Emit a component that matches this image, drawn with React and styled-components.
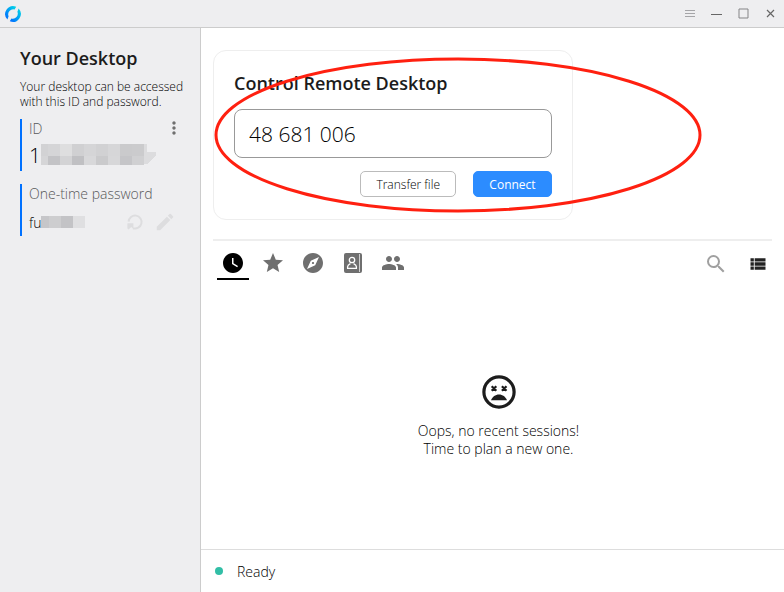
import React, { useState } from "react";
import styled, { createGlobalStyle, css } from "styled-components";
import {
  MdWatchLater,
  MdStar,
  MdExplore,
  MdPeople,
  MdSearch,
  MdViewList,
  MdMoreVert,
  MdEdit,
} from "react-icons/md";

const GlobalStyle = createGlobalStyle`
  *, *::before, *::after { box-sizing: border-box; }
  body {
    margin: 0;
    background: #fff;
    color: #000;
    font-family: "Open Sans", "Noto Sans", sans-serif;
    font-size: 14px;
    font-weight: 300;
  }
  button, input { font: inherit; color: inherit; }
`;

const Window = styled.div`
  display: flex;
  flex-direction: column;
  min-height: 100vh;
`;

const TitleBar = styled.header`
  display: flex;
  align-items: center;
  justify-content: space-between;
  height: 28px;
  padding: 0 0 0 4px;
  background: #eeeef0;
  border-bottom: 1px solid #ccc;
`;

const WindowControls = styled.div`
  display: flex;
`;

const IconButton = styled.button`
  display: inline-flex;
  flex: none;
  align-items: center;
  justify-content: center;
  width: ${(p) => p.$width || 24}px;
  height: ${(p) => p.$height || 24}px;
  padding: 0;
  border: 0;
  background: transparent;
  color: ${(p) => p.$color || "#6f6f6f"};
  cursor: pointer;
`;

const Body = styled.div`
  display: flex;
  flex: 1;
`;

const Sidebar = styled.aside`
  flex: none;
  width: 201px;
  padding: 17px 16px 0 20px;
  background: #eeeef0;
  border-right: 1px solid #ccc;
`;

const Heading = styled.h2`
  display: block;
  margin: 0;
  color: #1c1c1c;
  font-size: 18px;
  font-weight: 600;
  line-height: 26px;
`;

const Hint = styled.p`
  margin: 8px 0 10px;
  font-size: 12px;
  line-height: 15px;
  white-space: nowrap;
`;

const Field = styled.section`
  height: 52px;
  margin-bottom: 13px;
  padding-left: 7px;
  border-left: 2px solid #0071ff;
`;

const FieldRow = styled.div`
  display: flex;
  align-items: center;
  justify-content: space-between;
  height: ${(p) => p.$height}px;
`;

const FieldLabel = styled.span`
  color: #58585a;
  font-size: 14px;
`;

const FieldValue = styled.span`
  display: flex;
  align-items: center;
  font-size: ${(p) => p.$size}px;
`;

const Actions = styled.div`
  display: flex;
  gap: 6px;
  margin-right: 7px;
`;

const Main = styled.main`
  display: flex;
  flex: 1;
  flex-direction: column;
  min-width: 0;
`;

const Content = styled.div`
  display: flex;
  flex: 1;
  flex-direction: column;
  padding: 22px 0 0 12px;
`;

const Card = styled.form`
  position: relative;
  width: 360px;
  padding: 19px 20px 22px;
  border: 1px solid #eee;
  border-radius: 13px;
`;

const IdInput = styled.input`
  display: block;
  width: 100%;
  height: 49px;
  margin: 13px 0;
  padding: 0 14px;
  border: 1px solid #999;
  border-radius: 8px;
  background: #fff;
  font-size: 21px;
  outline: none;
`;

const CardActions = styled.div`
  display: flex;
  justify-content: flex-end;
  gap: 17px;
`;

const Button = styled.button`
  min-width: 79px;
  height: 26px;
  padding: 0 15px;
  border: 1px solid #bbb;
  border-radius: 5px;
  background: #fff;
  font-size: 12px;
  cursor: pointer;
  ${(p) =>
    p.$primary &&
    css`
      border-color: #2c8cff;
      background: #2c8cff;
      color: #fff;
      font-weight: 400;
    `}
`;

const Marker = styled.svg`
  position: absolute;
  top: 5px;
  left: 0;
  pointer-events: none;
`;

const Toolbar = styled.div`
  display: flex;
  align-items: flex-start;
  justify-content: space-between;
  margin: 19px 12px 0 0;
  padding: 7px 0 0 4px;
  border-top: 2px solid #eee;
`;

const Tabs = styled.nav`
  display: flex;
  gap: 8px;
`;

const Tab = styled.button`
  display: flex;
  align-items: center;
  justify-content: center;
  width: 32px;
  height: 32px;
  padding: 0;
  border: 0;
  border-bottom: 2px solid ${(p) => (p.$active ? "#000" : "transparent")};
  background: transparent;
  color: ${(p) => (p.$active ? "#000" : "#6f6f6f")};
  cursor: pointer;
`;

const Tools = styled.div`
  display: flex;
  gap: 18px;
  padding: 4px 2px 0 0;
`;

const Empty = styled.div`
  display: flex;
  flex: 1;
  flex-direction: column;
  align-items: center;
  justify-content: center;
  gap: 10px;
  line-height: 18px;
  text-align: center;
`;

const EmptyText = styled.p`
  margin: 0;
`;

const StatusBar = styled.footer`
  display: flex;
  align-items: center;
  gap: 14px;
  height: 43px;
  padding-left: 14px;
  border-top: 1px solid #ddd;
`;

const StatusDot = styled.span`
  width: 8px;
  height: 8px;
  border-radius: 50%;
  background: #32bea6;
`;

function Logo() {
  return (
    <svg width="18" height="18" viewBox="0 0 18 18" aria-label="RustDesk">
      <defs>
        <linearGradient id="logo" x1="0" y1="1" x2="1" y2="0">
          <stop offset="0.1" stopColor="#0071ff" />
          <stop offset="0.9" stopColor="#00d0e8" />
        </linearGradient>
      </defs>
      <g fill="url(#logo)">
        <path d="M3.4 14.6A8 8 0 0 1 12.2 1.7L10.6 4.6A5 5 0 0 0 4.6 11.3Z" />
        <path d="M14.6 3.4A8 8 0 0 1 5.8 16.3L7.4 13.4A5 5 0 0 0 13.4 6.7Z" />
      </g>
    </svg>
  );
}

function MenuGlyph() {
  return (
    <svg width="10" height="9" viewBox="0 0 10 9" fill="none" stroke="#a5a5a8">
      <path d="M0 1.5h10M0 4.5h10M0 7.5h10" />
    </svg>
  );
}

function MinimizeGlyph() {
  return (
    <svg width="11" height="11" viewBox="0 0 11 11" fill="none" stroke="#666">
      <path d="M0 6.5h11" />
    </svg>
  );
}

function MaximizeGlyph() {
  return (
    <svg width="11" height="11" viewBox="0 0 11 11" fill="none" stroke="#858587">
      <path d="M1 1h9v9H1z" />
    </svg>
  );
}

function CloseGlyph() {
  return (
    <svg width="9" height="9" viewBox="0 0 9 9" fill="none" stroke="#666" strokeWidth="1.2">
      <path d="M1 1l7 7M8 1l-7 7" />
    </svg>
  );
}

function RefreshGlyph() {
  return (
    <svg width="18" height="18" viewBox="0 0 18 18" fill="none" stroke="currentColor" strokeWidth="2">
      <path d="M2.6 8.6A6.5 6.5 0 1 1 7 15.2" />
      <path d="M1.4 10.2H7.400V16L5.200 14 2.600 16.600 1.400 15.400Z" fill="currentColor" stroke="none" />
    </svg>
  );
}

function AddressBookGlyph() {
  return (
    <svg width="20" height="20" viewBox="0 0 20 20">
      <rect x="1" y="0" width="18" height="20" rx="2" fill="#6f6f6f" />
      <path d="M16.5 1v18" stroke="#d0d0d0" />
      <g fill="none" stroke="#fff" strokeWidth="1.3">
        <circle cx="9" cy="7" r="2.7" />
        <path d="M4.6 15.4v-1.6c0-1.4 1.2-2.4 2.8-3.2M13.4 15.4v-1.6c0-1.4-1.2-2.4-2.8-3.2M4 15.4h10" />
      </g>
    </svg>
  );
}

function SadFace() {
  return (
    <svg width="40" height="40" viewBox="0 0 40 40" fill="none" stroke="#1c1c1c">
      <circle cx="20" cy="20" r="15.1" strokeWidth="3.2" />
      <path d="M12.7 14.2l4.6 4.6M17.3 14.2l-4.6 4.6M22.9 14.2l4.6 4.6M27.5 14.2l-4.6 4.6" strokeWidth="2.2" />
      <path d="M12 28.2c1.3-3.5 4.4-5.8 8-5.8s6.7 2.3 8 5.8z" fill="#1c1c1c" stroke="none" />
    </svg>
  );
}

const idCells = [
  [0, 7, "#d2d2d4", "#d5d5d7"],
  [7, 12, "#d5d5d7", "#c3c3c6"],
  [19, 12, "#dededf", "#d3d3d5"],
  [31, 12, "#d0d0d2", "#c0c0c3"],
  [43, 12, "#d5d5d7", "#d8d8da"],
  [55, 12, "#d1d1d3", "#cacacc"],
  [67, 12, "#d6d6d8", "#d7d7d9"],
  [79, 12, "#cacacc", "#c5c5c8"],
  [91, 12, "#cbcbcd", "#d0d0d2"],
];

function MaskedId() {
  return (
    <svg width="116" height="24" viewBox="0 0 116 24" aria-label="hidden" shapeRendering="crispEdges">
      {idCells.map(([x, w, top, bottom]) => (
        <g key={x}>
          <rect x={x} y="1" width={w} height="12" fill={top} />
          <rect x={x} y="13" width={w} height="9" fill={bottom} />
        </g>
      ))}
      <path d="M103 1h3v8h9v3l-9 9h-3z" fill="#dcdcde" />
    </svg>
  );
}

const passwordCells = [
  [0, 8, "#c6c6c9"],
  [8, 12, "#cdcdcf"],
  [20, 12, "#c3c3c6"],
  [32, 12, "#dfdfe1"],
];

function MaskedPassword() {
  return (
    <svg width="44" height="12" viewBox="0 0 44 12" aria-label="hidden" shapeRendering="crispEdges">
      {passwordCells.map(([x, w, fill]) => (
        <rect key={x} x={x} width={w} height="12" fill={fill} />
      ))}
    </svg>
  );
}

const tabs = [
  { name: "Recent sessions", icon: <MdWatchLater size={24} /> },
  { name: "Favorites", icon: <MdStar size={24} /> },
  { name: "Discovered", icon: <MdExplore size={24} /> },
  { name: "Address book", icon: <AddressBookGlyph /> },
  { name: "Group", icon: <MdPeople size={24} /> },
];

export default function App() {
  const [active, setActive] = useState(0);
  const [remoteId, setRemoteId] = useState("48 681 006");

  return (
    <>
      <GlobalStyle />
      <Window>
        <TitleBar>
          <Logo />
          <WindowControls>
            <IconButton $width={27} aria-label="Menu"><MenuGlyph /></IconButton>
            <IconButton $width={27} aria-label="Minimize"><MinimizeGlyph /></IconButton>
            <IconButton $width={27} aria-label="Maximize"><MaximizeGlyph /></IconButton>
            <IconButton $width={27} aria-label="Close"><CloseGlyph /></IconButton>
          </WindowControls>
        </TitleBar>
        <Body>
          <Sidebar>
            <Heading>Your Desktop</Heading>
            <Hint>
              Your desktop can be accessed
              <br />
              with this ID and password.
            </Hint>
            <Field>
              <FieldRow $height={18}>
                <FieldLabel>ID</FieldLabel>
                <IconButton $width={20} $height={18} aria-label="More"><MdMoreVert size={20} /></IconButton>
              </FieldRow>
              <FieldRow $height={36}>
                <FieldValue $size={21}>1<MaskedId /></FieldValue>
              </FieldRow>
            </Field>
            <Field>
              <FieldRow $height={18}>
                <FieldLabel>One-time password</FieldLabel>
              </FieldRow>
              <FieldRow $height={40}>
                <FieldValue $size={14}>fu<MaskedPassword /></FieldValue>
                <Actions>
                  <IconButton $color="#dddddf" aria-label="Refresh password"><RefreshGlyph /></IconButton>
                  <IconButton $color="#dddddf" aria-label="Edit password"><MdEdit size={22} /></IconButton>
                </Actions>
              </FieldRow>
            </Field>
          </Sidebar>
          <Main>
            <Content>
              <Card onSubmit={(e) => e.preventDefault()}>
                <Heading as="label" htmlFor="remote-id">Control Remote Desktop</Heading>
                <IdInput id="remote-id" value={remoteId} onChange={(e) => setRemoteId(e.target.value)} />
                <CardActions>
                  <Button type="button">Transfer file</Button>
                  <Button type="submit" $primary>Connect</Button>
                </CardActions>
                <Marker width="490" height="158" viewBox="0 0 490 158" aria-hidden="true">
                  <ellipse cx="244" cy="79" rx="242" ry="76" fill="none" stroke="#ff2010" strokeWidth="3" />
                </Marker>
              </Card>
              <Toolbar>
                <Tabs>
                  {tabs.map((tab, i) => (
                    <Tab key={tab.name} $active={i === active} aria-label={tab.name} onClick={() => setActive(i)}>
                      {tab.icon}
                    </Tab>
                  ))}
                </Tabs>
                <Tools>
                  <IconButton $color="#a0a0a0" aria-label="Search"><MdSearch size={24} /></IconButton>
                  <IconButton $color="#222" aria-label="List view"><MdViewList size={20} /></IconButton>
                </Tools>
              </Toolbar>
              <Empty>
                <SadFace />
                <EmptyText>
                  Oops, no recent sessions!
                  <br />
                  Time to plan a new one.
                </EmptyText>
              </Empty>
            </Content>
            <StatusBar>
              <StatusDot />
              Ready
            </StatusBar>
          </Main>
        </Body>
      </Window>
    </>
  );
}
